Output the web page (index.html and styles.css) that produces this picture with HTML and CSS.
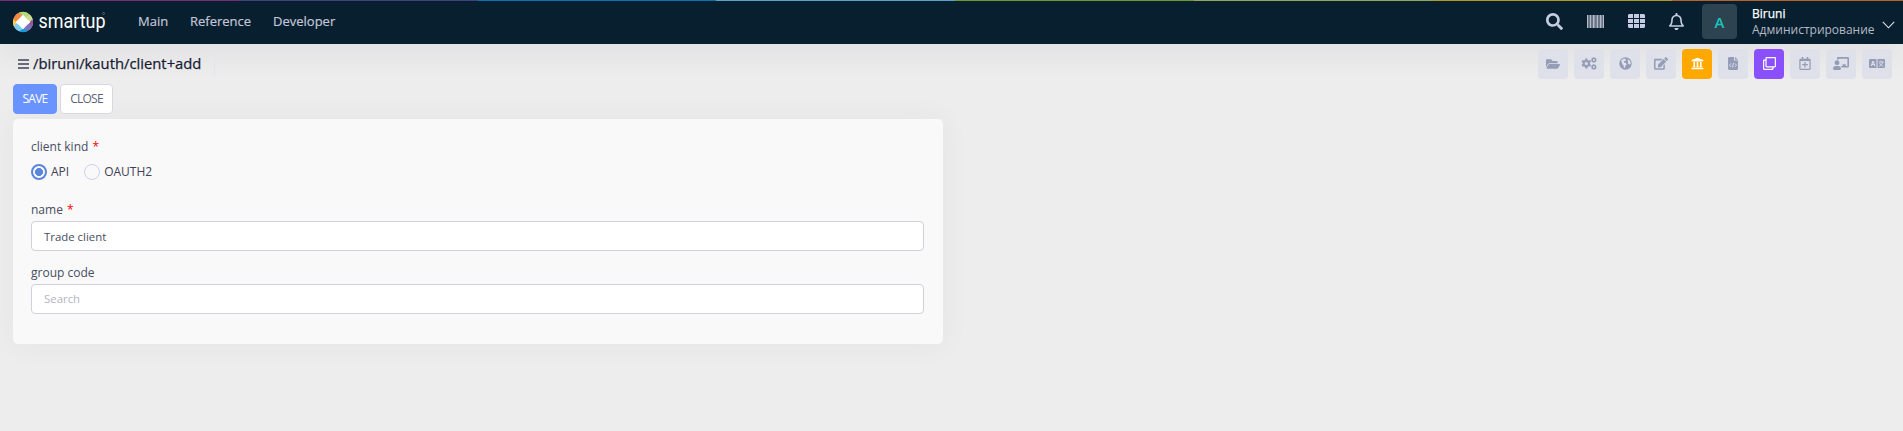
FILE: index.html
```html
<!DOCTYPE html>
<html lang="en">
<head>
<meta charset="utf-8">
<title>smartup</title>
<link rel="stylesheet" href="styles.css">
</head>
<body>
<div class="stripe"><i class="s1"></i><i class="s2"></i><i class="s3"></i><i class="s4"></i><i class="s5"></i><i class="s6"></i><i class="s7"></i><i class="s8"></i></div>
<header class="header">
  <svg class="logo" width="96" height="36" viewBox="0 -3 96 36">
    <g transform="translate(10 15)">
      <circle r="10" fill="#fff"/>
      <path d="M-7.1-7.1A10 10 0 0 1 0-10L3-5.5-3-5.5Z" fill="#7fc6a0"/>
      <path d="M-4-9.2A10 10 0 0 1 7.1-7.1L5-2 0-7Z" fill="#b5d77a"/>
      <path d="M7.1-7.1A10 10 0 0 1 10 1L7 0 2-5Z" fill="#cbdc8b"/>
      <path d="M9.5-3A10 10 0 0 1 7.1 7.1L5 3 7 0Z" fill="#9a4fa5"/>
      <path d="M9 4.4A10 10 0 0 1 2 9.8L1 6 6 1Z" fill="#7b74b8"/>
      <path d="M5 8.7A10 10 0 0 1-5 8.7L0 6Z" fill="#1299e0"/>
      <path d="M-4 9.2A10 10 0 0 1-9.5 3L-6 1 0 7Z" fill="#7dcdf0"/>
      <path d="M-9 4.4A10 10 0 0 1-9.5-3L-6 0Z" fill="#f5d04c"/>
      <path d="M-9.7-2.4A10 10 0 0 1-3-9.5L-1-6-7 0Z" fill="#f58a3c"/>
      <path d="M0-6.800Q2.500-3 6.800 0Q3 2.500 0 6.800Q-2.500 3-6.800 0Q-3-2.500 0-6.800Z" fill="#fff" stroke="#fff"/>
    </g>
    <text class="wordmark" x="25.5" y="20.8" textLength="67" lengthAdjust="spacingAndGlyphs">smartup</text>
    <circle cx="90.5" cy="6.5" r="1" fill="none" stroke="#7d8a94" stroke-width=".6"/>
  </svg>
  <nav class="menu"><a>Main</a><a>Reference</a><a>Developer</a></nav>
  <div class="tools">
    <svg width="17" height="17" viewBox="0 0 512 512"><path d="M505 442.700L405.300 343c-4.500-4.500-10.600-7-17-7H372c27.600-35.300 44-79.700 44-128C416 93.100 322.900 0 208 0S0 93.100 0 208s93.100 208 208 208c48.300 0 92.700-16.400 128-44v16.300c0 6.400 2.500 12.500 7 17l99.700 99.700c9.400 9.400 24.600 9.400 33.900 0l28.300-28.300c9.400-9.400 9.400-24.600.1-34zM208 336c-70.700 0-128-57.200-128-128 0-70.700 57.200-128 128-128 70.700 0 128 57.200 128 128 0 70.700-57.200 128-128 128z"/></svg>
    <svg class="barcode" width="17" height="13" viewBox="0 0 17 13"><path class="haze" d="M0 0h17v13H0z"/><path d="M0 0h1v13H0zM3 0h1v13H3zM6 0h1.500v13H6zM9.800 0h1.200v13H9.800zM13 0h1.300v13H13zM16 0h1v13h-1z"/></svg>
    <svg width="17" height="14" viewBox="0 0 17 14"><path d="M1 0h4v4H0V1zM6 0h5v4H6zM12 0h4l1 1v3h-5zM0 5h5v4H0zM6 5h5v4H6zM12 5h5v4h-5zM0 10h5v4H1l-1-1zM6 10h5v4H6zM12 10h5v3l-1 1h-4z"/></svg>
    <svg width="15" height="17" viewBox="0 0 448 512"><path d="M439.390 362.290c-19.320-20.760-55.470-51.990-55.470-154.290 0-77.700-54.480-139.900-127.940-155.160V32c0-17.670-14.320-32-31.980-32s-31.980 14.330-31.980 32v20.840C118.560 68.100 64.080 130.300 64.080 208c0 102.300-36.150 133.530-55.470 154.290-6 6.450-8.660 14.160-8.610 21.710.11 16.400 12.980 32 32.100 32h383.800c19.120 0 32-15.600 32.100-32 .05-7.550-2.610-15.270-8.610-21.710zM67.530 368c21.220-27.970 44.420-74.330 44.530-159.420 0-.2-.06-.38-.06-.58 0-61.860 50.140-112 112-112s112 50.140 112 112c0 .2-.06.380-.06.580.11 85.100 23.310 131.460 44.530 159.420H67.530zM224 512c35.320 0 63.970-28.650 63.970-64H160.030c0 35.350 28.650 64 63.970 64z"/></svg>
  </div>
  <div class="avatar">A</div>
  <div class="user"><b>Biruni</b><span>Администрирование</span></div>
  <svg class="chevron" width="13" height="8" viewBox="0 0 13 8"><path d="M.8.8l5.700 6 5.700-6"/></svg>
</header>
<section class="subheader">
  <svg class="burger" width="11" height="10" viewBox="0 0 11 10"><path d="M0 1h11M0 5h11M0 9h11"/></svg>
  <h1>/biruni/kauth/client+add</h1>
  <div class="divider"></div>
  <div class="actions">
    <span><svg width="14" height="12" viewBox="0 32 576 448"><path d="M572.700 292.100L500.300 416.200A64 64 0 0 1 445 448H45c-18.500 0-30.100-20.100-20.700-36.100l72.400-124.200A64 64 0 0 1 152 256h400c18.500 0 30 20.100 20.700 36.100zM152 224h328v-48c0-26.500-21.500-48-48-48H272l-64-64H48C21.500 64 0 85.500 0 112v278l69-118.200C86.200 242.300 118 224 152 224z"/></svg></span>
    <span><svg width="16" height="13" viewBox="0 0 16 13"><path fill-rule="evenodd" d="M4.300 1.500h2l.3 1.500 1 .6 1.500-.5 1 1.700-1.200 1v1.300l1.200 1-1 1.700-1.500-.5-1 .6-.3 1.500h-2L4 9.900l-1-.6-1.500.5-1-1.700 1.200-1V5.800l-1.200-1 1-1.700L3 3.600 4 3zM5.300 4.900a1.600 1.600 0 1 0 0 3.200 1.600 1.600 0 0 0 0-3.200zM12.500 0l.8.8 1.200-.2.4 1.200.9.900-.7 1 .1 1.200-1.300.2-.8.900-1-.8-1.200.1-.2-1.200-.8-.9.700-1V.9l1.200-.1zM12.900 2.100a.9.900 0 1 0 0 1.800.9.900 0 0 0 0-1.800zM12.500 7l.8.8 1.200-.2.4 1.200.9.900-.7 1 .1 1.200-1.300.2-.8.900-1-.8-1.200.1-.2-1.200-.8-.9.700-1V7.900l1.200-.1zM12.900 9.100a.9.900 0 1 0 0 1.800.9.900 0 0 0 0-1.800z"/></svg></span>
    <span><svg width="13" height="13" viewBox="0 0 13 13"><circle cx="6.500" cy="6.500" r="6.200"/><path class="land" d="M2.200 3.200L5 1.500l2 .7-.5 1.500-1.700.8.300 1 1.700.5.900 1.200-1.300 1.700-.6 2-1-.5-.2-2-1.400-1.300zM9 2.300l2 1.500.9 2.400-1.600 1.500-1.500-1.500.6-1.300-.8-.8z"/></svg></span>
    <span><svg width="14" height="13" viewBox="0 0 576 512"><path d="M402.600 83.200l90.200 90.200c3.800 3.800 3.800 10 0 13.800L274.400 405.600l-92.800 10.300c-12.400 1.400-22.900-9.100-21.500-21.500l10.300-92.800L388.800 83.200c3.800-3.800 10-3.800 13.800 0zm162-22.900l-48.800-48.800c-15.200-15.200-39.900-15.200-55.200 0l-35.400 35.400c-3.800 3.800-3.800 10 0 13.800l90.200 90.200c3.800 3.800 10 3.800 13.800 0l35.400-35.400c15.200-15.300 15.200-40 0-55.200zM384 346.200V448H64V128h229.800c3.200 0 6.200-1.300 8.500-3.500l40-40c7.600-7.600 2.200-20.500-8.500-20.500H48C21.500 64 0 85.500 0 112v352c0 26.500 21.500 48 48 48h352c26.500 0 48-21.500 48-48V306.200c0-10.700-12.900-16-20.500-8.500l-40 40c-2.200 2.300-3.500 5.300-3.500 8.500z"/></svg></span>
    <span class="orange"><svg width="13" height="13" viewBox="0 0 512 512"><path d="M496 128v16a8 8 0 0 1-8 8h-24v12c0 6.600-5.400 12-12 12H60c-6.600 0-12-5.400-12-12v-12H24a8 8 0 0 1-8-8v-16a8 8 0 0 1 4.900-7.400l232-88a8 8 0 0 1 6.100 0l232 88A8 8 0 0 1 496 128zm-24 304H40c-13.300 0-24 10.700-24 24v16a8 8 0 0 0 8 8h464a8 8 0 0 0 8-8v-16c0-13.300-10.700-24-24-24zM96 192v192H60c-6.600 0-12 5.400-12 12v20h416v-20c0-6.600-5.400-12-12-12h-36V192h-64v192h-64V192h-64v192h-64V192H96z"/></svg></span>
    <span><svg width="10" height="13" viewBox="0 0 10 13"><path d="M1 0h5v3.500h4V12l-1 1H1l-1-1V1zM7 0l3 2.700H7z"/><path class="code" d="M3 6.500L1.500 8.200 3 9.900M7 6.500l1.500 1.700L7 9.900M5.500 6l-1 4.500"/></svg></span>
    <span class="violet"><svg width="13" height="13" viewBox="0 0 512 512"><path fill-rule="evenodd" d="M464 0H144c-26.500 0-48 21.500-48 48v48H48c-26.500 0-48 21.500-48 48v320c0 26.500 21.500 48 48 48h320c26.500 0 48-21.500 48-48v-48h48c26.500 0 48-21.500 48-48V48c0-26.500-21.500-48-48-48zM362 464H54a6 6 0 0 1-6-6V150a6 6 0 0 1 6-6h42v224c0 26.500 21.500 48 48 48h224v42a6 6 0 0 1-6 6zm96-96H150a6 6 0 0 1-6-6V54a6 6 0 0 1 6-6h308a6 6 0 0 1 6 6v308a6 6 0 0 1-6 6z"/></svg></span>
    <span><svg width="12" height="13" viewBox="0 0 448 512"><path fill-rule="evenodd" d="M336 292v24c0 6.600-5.400 12-12 12h-76v76c0 6.600-5.400 12-12 12h-24c-6.600 0-12-5.400-12-12v-76h-76c-6.600 0-12-5.400-12-12v-24c0-6.600 5.400-12 12-12h76v-76c0-6.600 5.400-12 12-12h24c6.600 0 12 5.400 12 12v76h76c6.600 0 12 5.400 12 12zm112-180v352c0 26.500-21.500 48-48 48H48c-26.500 0-48-21.500-48-48V112c0-26.500 21.500-48 48-48h48V12c0-6.600 5.400-12 12-12h40c6.600 0 12 5.400 12 12v52h128V12c0-6.600 5.400-12 12-12h40c6.600 0 12 5.400 12 12v52h48c26.500 0 48 21.500 48 48zm-48 346V160H48v298a6 6 0 0 0 6 6h340a6 6 0 0 0 6-6z"/></svg></span>
    <span><svg width="16" height="13" viewBox="0 0 640 512"><path d="M208 352c-2.400 0-4.800.4-7.100 1.100a129 129 0 0 1-81.800 0c-2.300-.7-4.700-1.100-7.100-1.100C49.900 352-.3 402.500 0 464.600.1 490.900 21.700 512 48 512h224c26.300 0 47.900-21.100 48-47.400.3-62.100-49.900-112.600-112-112.600zM160 320c53 0 96-43 96-96s-43-96-96-96-96 43-96 96 43 96 96 96zM592 0H208c-26.500 0-48 22.300-48 49.600V96c23.400 0 45.100 6.800 64 17.800V64h352v288h-64v-64H384v64h-76.200c19.100 16.700 33.100 38.700 39.700 64H592c26.500 0 48-22.300 48-49.600V49.600C640 22.300 618.500 0 592 0z"/></svg></span>
    <span><svg width="16" height="9" viewBox="0 0 16 9"><path fill-rule="evenodd" d="M.8 0h6.700v9H.8L0 8.200V.8zM3.500 2L1.700 7h1.200l.3-1h1.700l.3 1h1.200L4.700 2zM4.100 3.400l.5 1.600h-1zM8.500 0h6.700l.8.8v7.400l-.8.8H8.500z"/><path class="code" d="M12.200 1.500v1.300M9.800 3h5M13.800 3c-.4 2-2 3.600-3.700 4.200M10.700 4c.7 1.700 2.200 2.800 3.800 3.300"/></svg></span>
  </div>
</section>
<main class="content">
  <div class="buttons"><button class="btn save">SAVE</button><button class="btn close">CLOSE</button></div>
  <form class="card">
    <label class="label">client kind <em>*</em></label>
    <div class="radios">
      <label class="radio"><i class="dot on"></i>API</label>
      <label class="radio"><i class="dot"></i>OAUTH2</label>
    </div>
    <label class="label">name <em>*</em></label>
    <input class="input" value="Trade client">
    <label class="label group">group code</label>
    <input class="input search" placeholder="Search">
  </form>
</main>
</body>
</html>
```
FILE: styles.css
```css
* { box-sizing: border-box; }
body {
  margin: 0;
  height: 431px;
  overflow: hidden;
  background: #ededed;
  font-family: "Open Sans", "Noto Sans", sans-serif;
  font-size: 13px;
  color: #464e5f;
}
.stripe { display: flex; height: 1px; }
.stripe i { flex: 0 0 238.8px; }
.s1 { background: #7b2a7b; }
.s2 { background: #45407f; }
.s3 { background: #0a72ae; }
.s4 { background: #5ba3c4; }
.s5 { background: #6c9a35; }
.s6 { background: #94a75a; }
.s7 { background: #b09a1c; }
.s8 { background: #b5622d; }
.header {
  display: flex;
  align-items: center;
  height: 43px;
  padding: 0 8px 2px 13px;
  background: #071f2e;
  box-shadow: 0 10px 30px rgba(82, 63, 105, .08);
}
.logo { overflow: visible; }
.wordmark { font: 400 20.5px Roboto, sans-serif; fill: #fff; }
.menu { display: flex; gap: 23px; margin-left: 29px; padding-bottom: 2px; font-size: 13px; color: #c3c5d8; -webkit-text-stroke: .2px; }
.menu a:first-child { width: 29px; }
.menu a:nth-child(2) { width: 60px; }
.tools { display: flex; align-items: center; gap: 24px; margin: 0 18px 1px auto; fill: #c5cbe3; }
.barcode { fill: #b4bacb; }
.haze { opacity: .55; }
.avatar {
  width: 35px;
  height: 35px;
  border-radius: 4px;
  background: #2d434f;
  color: #1bc5bd;
  font-size: 15px;
  font-weight: 600;
  line-height: 37px;
  text-align: center;
}
.user { display: flex; flex-direction: column; width: 123px; margin-left: 15px; line-height: 16px; font-size: 12px; color: #b6b9c6; white-space: nowrap; }
.user b { font-size: 12px; font-weight: 500; color: #fff; -webkit-text-stroke: .25px; }
.chevron { margin: 7px 0 0 7px; fill: none; stroke: #e4e6ef; stroke-width: 1.1; }
.subheader { display: flex; align-items: center; height: 40px; padding: 0 11px 0 18px; }
.burger { stroke: #3f4254; stroke-width: 1.4; }
h1 { margin: 0 0 2px 4px; font-size: 14.8px; line-height: 20px; font-weight: 500; color: #181c32; -webkit-text-stroke: .25px; }
.divider { width: 1px; height: 22px; margin-left: 13px; background: #e4e5ea; }
.actions { display: flex; gap: 6px; margin-left: auto; }
.actions span { display: flex; align-items: center; justify-content: center; width: 30px; height: 30px; padding-bottom: 1px; border-radius: 4px; background: #dfe1ea; fill: #959cb6; }
.actions .orange { background: #ffa800; fill: #fff; }
.actions .violet { background: #8950fc; fill: #fff; }
.land { fill: #dfe1ea; }
.code { fill: none; stroke: #dfe1ea; stroke-width: .9; }
.content { padding: 0 13px; }
.buttons { display: flex; gap: 3px; height: 35px; }
.btn { height: 30px; padding: 0 0 1px; border: 1px solid; border-radius: 4px; font: 12px "Open Sans", sans-serif; letter-spacing: -.75px; }
.save { width: 44px; background: #6993ff; border-color: #6993ff; color: #fff; }
.close { width: 53px; background: #fff; border-color: #d6d9e2; color: #5e6278; }
.card { display: flex; flex-direction: column; width: 930px; height: 225px; padding: 18px 19px 0 18px; border-radius: 5px; background: #f9f9f9; box-shadow: 0 0 30px rgba(82, 63, 105, .05); }
.label { height: 20px; line-height: 20px; font-size: 12px; color: #464e5f; }
.group { line-height: 19px; }
.label em { margin-left: 1px; color: #f00; font-style: normal; }
.radios { display: flex; gap: 15px; height: 16px; margin: 7px 0 20px; }
.radio { display: flex; align-items: center; gap: 4px; line-height: 14px; font-size: 12px; color: #3f4254; }
.dot { width: 16px; height: 16px; border: 1px solid #cbd3ec; border-radius: 50%; }
.on { border: 2px solid #5a86dc; background: radial-gradient(circle, #5a86dc 3.7px, #f9f9f9 4.3px); }
.input { width: 893px; height: 30px; margin: 1px 0 12px; padding: 0 12px; border: 1px solid #cfd2db; border-radius: 4px; background: #fff; color: #464e5f; font: 11.4px "Open Sans", sans-serif; }
.search { padding-bottom: 1px; }
.input::placeholder { color: #b5b5c3; }
```
